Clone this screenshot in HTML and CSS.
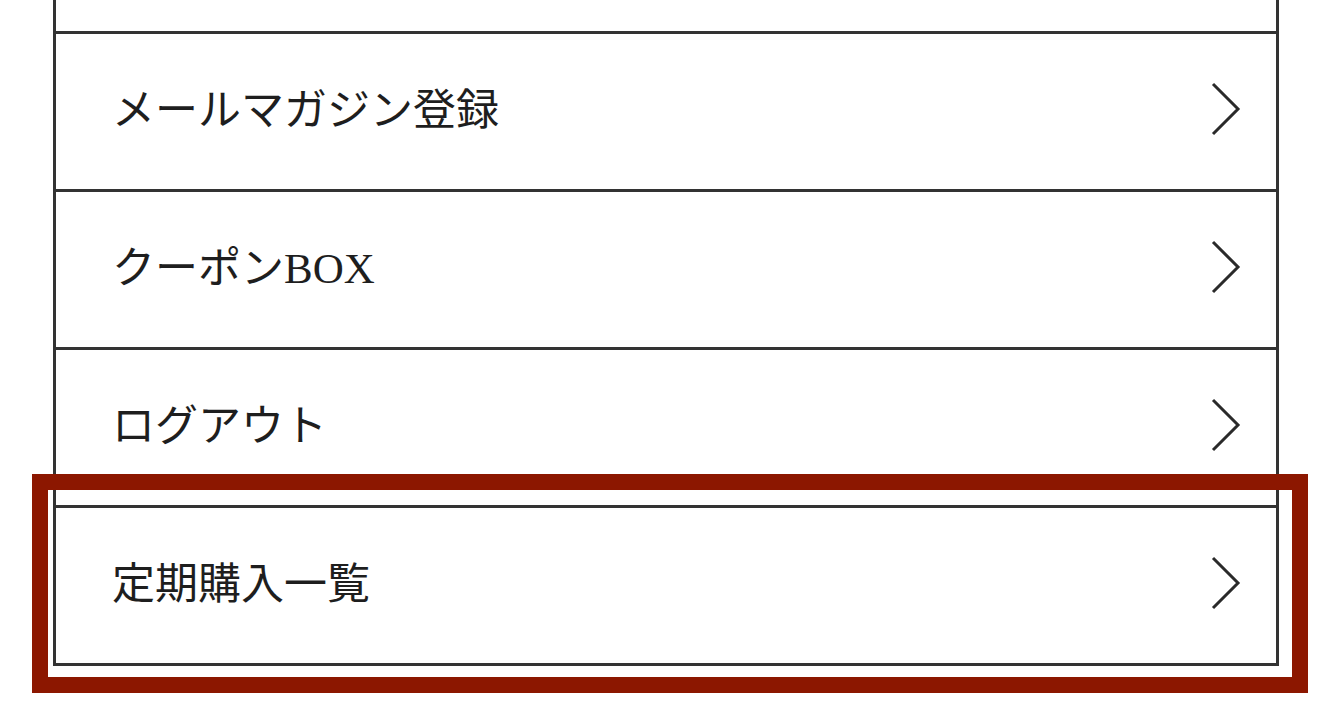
FILE: index.html
```html
<!DOCTYPE html>
<html lang="ja">
<head>
<meta charset="utf-8">
<title>メニュー</title>
<link rel="stylesheet" href="styles.css">
</head>
<body>
<div class="page">
  <ul class="menu">
    <li class="menu-item menu-item--partial"></li>
    <li class="menu-item">
      <span class="menu-label">メールマガジン登録</span>
      <svg class="chevron" viewBox="0 0 30 54" width="30" height="54"><polyline points="2,2 27,27 2,52" fill="none" stroke="#2a2a2a" stroke-width="3"/></svg>
    </li>
    <li class="menu-item">
      <span class="menu-label">クーポンBOX</span>
      <svg class="chevron" viewBox="0 0 30 54" width="30" height="54"><polyline points="2,2 27,27 2,52" fill="none" stroke="#2a2a2a" stroke-width="3"/></svg>
    </li>
    <li class="menu-item">
      <span class="menu-label">ログアウト</span>
      <svg class="chevron" viewBox="0 0 30 54" width="30" height="54"><polyline points="2,2 27,27 2,52" fill="none" stroke="#2a2a2a" stroke-width="3"/></svg>
    </li>
    <li class="menu-item">
      <span class="menu-label">定期購入一覧</span>
      <svg class="chevron" viewBox="0 0 30 54" width="30" height="54"><polyline points="2,2 27,27 2,52" fill="none" stroke="#2a2a2a" stroke-width="3"/></svg>
    </li>
  </ul>
  <div class="highlight"></div>
</div>
</body>
</html>
```

FILE: styles.css
```css
html, body {
  margin: 0;
  padding: 0;
  background: #ffffff;
}

body {
  font-family: "Liberation Serif", "Noto Sans CJK JP", serif;
  color: #1e1e1e;
}

.page {
  position: relative;
  width: 1341px;
  height: 724px;
  overflow: hidden;
}

.menu {
  list-style: none;
  margin: 0 0 0 53px;
  padding: 0;
  width: 1226px;
  box-sizing: border-box;
  border-left: 3px solid #333333;
  border-right: 3px solid #333333;
  border-bottom: 3px solid #333333;
}

.menu-item {
  display: flex;
  align-items: center;
  justify-content: space-between;
  height: 155px;
  padding: 0 35px 0 56px;
  border-top: 3px solid #333333;
}

.menu-item--partial {
  height: 31px;
  border-top: none;
}

.menu-label {
  font-size: 43px;
  line-height: 1;
  margin-bottom: 2px;
}

.chevron {
  display: block;
  margin: 0 0 6px 0;
}

.highlight {
  position: absolute;
  left: 32px;
  top: 474px;
  width: 1276px;
  height: 219px;
  box-sizing: border-box;
  border: 16px solid #8c1700;
}
```
